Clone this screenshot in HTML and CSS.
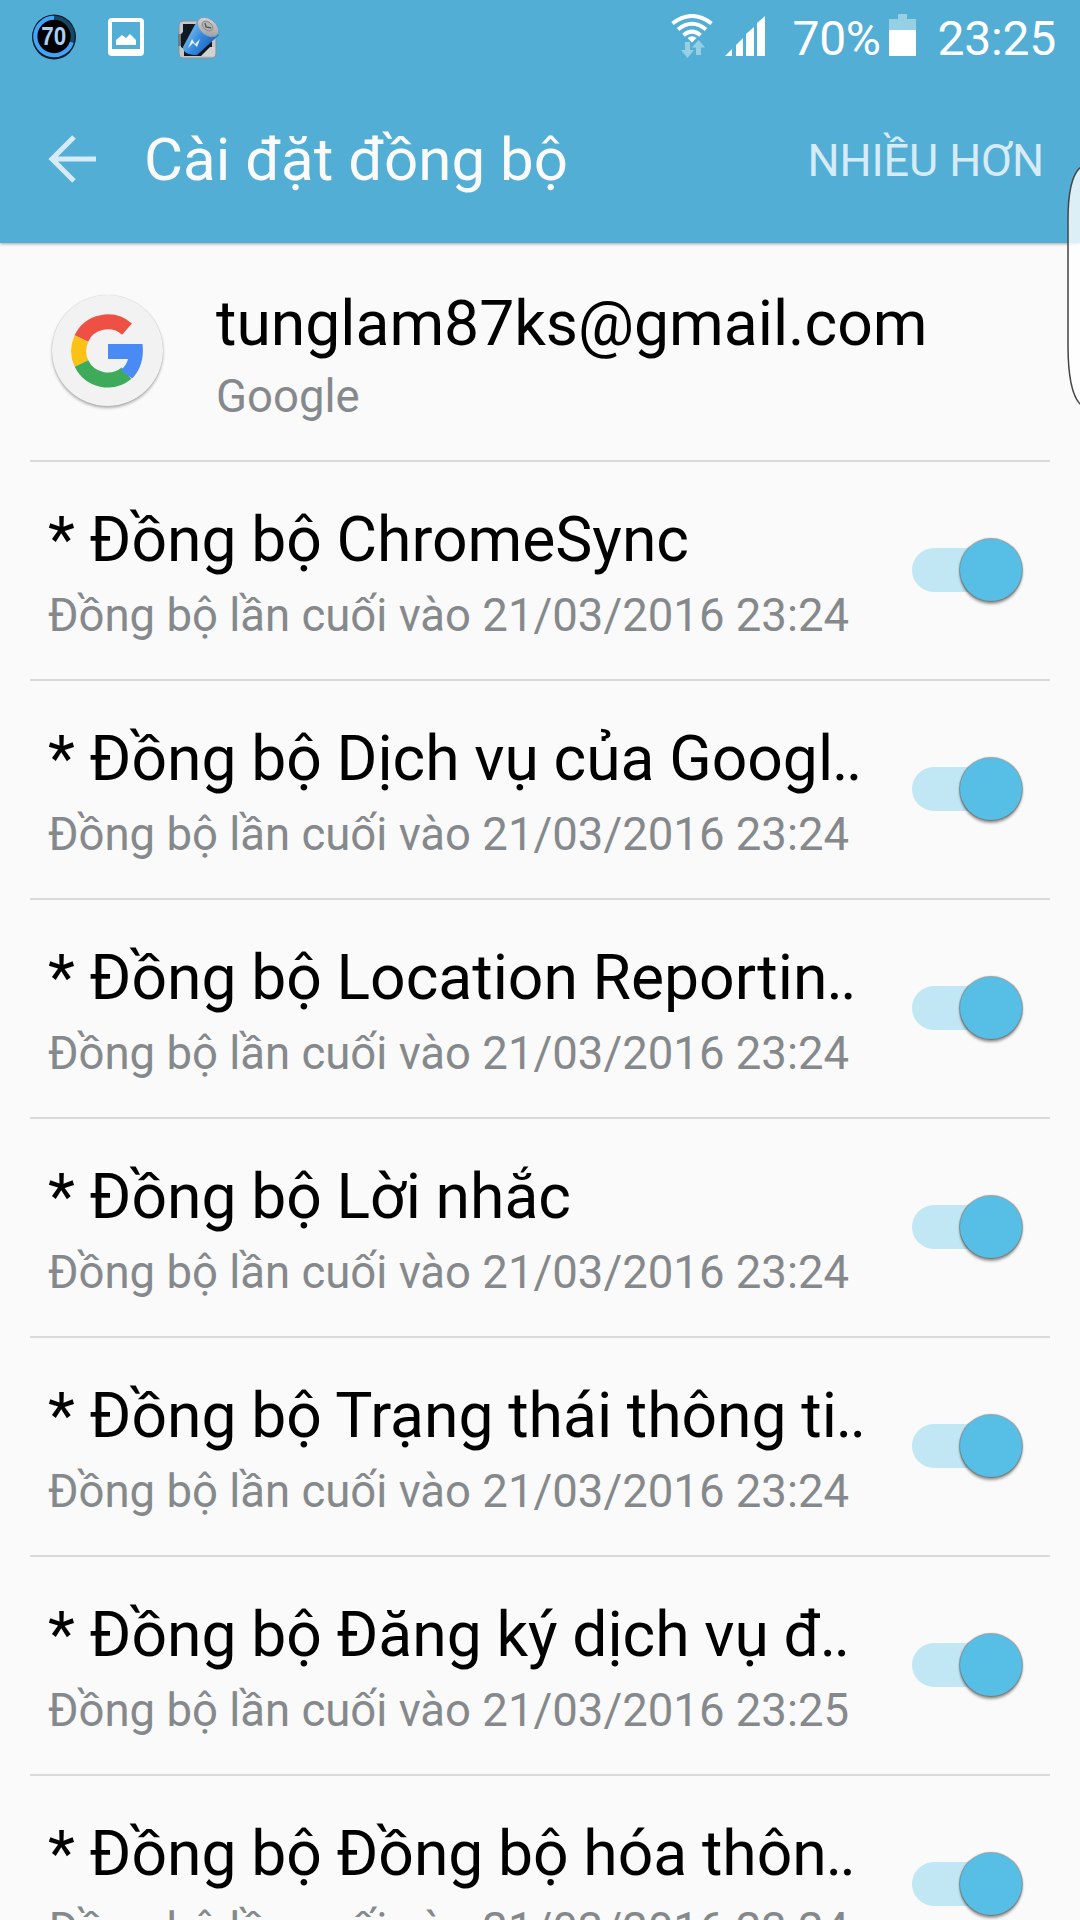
FILE: index.html
```html
<!DOCTYPE html>
<html lang="vi">
<head>
<meta charset="utf-8">
<title>Cài đặt đồng bộ</title>
<link rel="stylesheet" href="styles.css">
</head>
<body>
<div class="screen">
  <header class="header">
    <div class="status">
      <div class="notifications">
        <div class="gauge">
          <svg width="44" height="46" viewBox="0 0 44 46">
            <ellipse cx="22" cy="23" rx="22" ry="22.5" fill="#0a1a26"/>
            <circle cx="22" cy="22.5" r="18.7" fill="#000" stroke="#174766" stroke-width="4"/>
            <path d="M22 3.8A18.7 18.7 0 1 0 39.8 28.3" fill="none" stroke="#3fa5fb" stroke-width="4"/>
            <text class="gauge-text" x="21.7" y="31" text-anchor="middle" textLength="25" lengthAdjust="spacingAndGlyphs">70</text>
          </svg>
        </div>
        <svg class="photo" width="36" height="38" viewBox="0 0 36 38">
          <path fill="#fff" fill-rule="evenodd" d="M4 0h28a4 4 0 0 1 4 4v30a4 4 0 0 1-4 4H4a4 4 0 0 1-4-4V4a4 4 0 0 1 4-4zM4 4v27h28V4z"/>
          <path fill="#fff" d="M8 27v-5l6-5 4 3 4-4 6 6v5z"/>
        </svg>
        <svg class="saver" width="44" height="44" viewBox="0 0 44 44">
          <defs>
            <linearGradient id="cell" x1="0" y1=".2" x2="1" y2=".8"><stop offset="0" stop-color="#8accf5"/><stop offset=".5" stop-color="#3187dd"/><stop offset="1" stop-color="#1b55a8"/></linearGradient>
            <linearGradient id="cap" x1="0" y1="0" x2="1" y2="1"><stop offset="0" stop-color="#ddd"/><stop offset="1" stop-color="#999"/></linearGradient>
          </defs>
          <rect x="2" y="4" width="37" height="37" rx="4" fill="#c4c8ca" stroke="#8a9095" stroke-width="1"/>
          <path d="M6 7h29v24l-7 8H7v-7l-3-2V17l2-2z" fill="#101820"/>
          <path d="M24 39l9-9h5v9z" fill="#d0d2d4"/>
          <path d="M1 17h3v12H1z" fill="#6f7a82"/>
          <path d="M20 4L6 30q0 8 14 8L42 18z" fill="url(#cell)"/>
          <ellipse cx="31" cy="10" rx="12" ry="8" transform="rotate(38 31 10)" fill="url(#cap)" stroke="#6f9fc8"/>
          <ellipse cx="30.500" cy="9" rx="6" ry="4" transform="rotate(38 30.500 9)" fill="#b5b5b5" stroke="#777" stroke-width=".7"/>
          <path d="M28 6l1 4 5 1" fill="none" stroke="#555" stroke-width="1.300"/>
          <path d="M11 31l4-9 3 5 5-5-3 8-4-4z" fill="#e8f3ff"/>
        </svg>
      </div>
      <div class="indicators">
        <svg class="wifi" width="42" height="46" viewBox="0 0 42 46">
          <g fill="none" stroke="#fff" stroke-width="4">
            <path d="M1.500 9.500Q21-5.500 40.500 9.500"/>
            <path d="M7 15.500Q21 4 35 15.500"/>
            <path d="M12.500 21.200Q21 14 29.500 21.200"/>
          </g>
          <path d="M16.500 24q4.500-3.500 9 0L21 28.500z" fill="#fff"/>
          <path d="M14 28h5v8h4l-6.500 8L10 36h4z" fill="#97d0e5"/>
          <path d="M27.500 26l6.500 7.500h-4V41h-5v-7.500h-4z" fill="#97d0e5"/>
        </svg>
        <svg class="signal" width="40" height="40" viewBox="0 0 40 40" fill="#fff">
          <path d="M0 40l7-7v7zM11 40V29l7-7v18zM21 40V18l8-7v29zM32 40V7l8-7v40z"/>
        </svg>
        <span class="percent">70%</span>
        <svg class="battery" width="27" height="42" viewBox="0 0 27 42">
          <path d="M9 0h9v5h9v11H0V5h9z" fill="#97d0e5"/>
          <path d="M0 16h27v26H0z" fill="#fff"/>
        </svg>
        <span class="clock">23:25</span>
      </div>
    </div>
    <div class="appbar">
      <svg class="back" width="48" height="48" viewBox="0 0 48 48" fill="none" stroke="#d6ebf5" stroke-width="5">
        <path d="M48 24H5M26 2L4 24l22 22"/>
      </svg>
      <h1 class="title">Cài đặt đồng bộ</h1>
      <span class="more">NHIỀU HƠN</span>
    </div>
  </header>

  <main class="list">
    <section class="row account">
      <div class="avatar">
        <svg width="72" height="74" viewBox="0 0 72 74">
          <g fill="none" stroke-width="15">
            <path d="M10.300 24.500A29.300 29.300 0 0 1 56 15.200" stroke="#ee5144"/>
            <path d="M10.500 49.500A29.300 29.300 0 0 1 10.500 24.500" stroke="#fbc116"/>
            <path d="M55.500 59.300A29.300 29.300 0 0 1 10.500 49.500" stroke="#3dab5a"/>
          </g>
          <path d="M37 30h34.500C73.500 46 68 58 61 64.500L49.500 56Q55.500 52 57 45H37z" fill="#4a8af5"/>
        </svg>
      </div>
      <div class="texts">
        <div class="name">tunglam87ks@gmail.com</div>
        <div class="sub">Google</div>
      </div>
    </section>
    <section class="row">
      <div class="texts"><div class="name">* Đồng bộ ChromeSync</div><div class="sub">Đồng bộ lần cuối vào 21/03/2016 23:24</div></div>
      <div class="switch"><div class="thumb"></div></div>
    </section>
    <section class="row">
      <div class="texts"><div class="name">* Đồng bộ Dịch vụ của Googl<span class="dots">..</span></div><div class="sub">Đồng bộ lần cuối vào 21/03/2016 23:24</div></div>
      <div class="switch"><div class="thumb"></div></div>
    </section>
    <section class="row">
      <div class="texts"><div class="name">* Đồng bộ Location Reportin<span class="dots">..</span></div><div class="sub">Đồng bộ lần cuối vào 21/03/2016 23:24</div></div>
      <div class="switch"><div class="thumb"></div></div>
    </section>
    <section class="row">
      <div class="texts"><div class="name">* Đồng bộ Lời nhắc</div><div class="sub">Đồng bộ lần cuối vào 21/03/2016 23:24</div></div>
      <div class="switch"><div class="thumb"></div></div>
    </section>
    <section class="row">
      <div class="texts"><div class="name">* Đồng bộ Trạng thái thông ti<span class="dots">..</span></div><div class="sub">Đồng bộ lần cuối vào 21/03/2016 23:24</div></div>
      <div class="switch"><div class="thumb"></div></div>
    </section>
    <section class="row">
      <div class="texts"><div class="name">* Đồng bộ Đăng ký dịch vụ đ<span class="dots">..</span></div><div class="sub">Đồng bộ lần cuối vào 21/03/2016 23:25</div></div>
      <div class="switch"><div class="thumb"></div></div>
    </section>
    <section class="row">
      <div class="texts"><div class="name">* Đồng bộ Đồng bộ hóa thôn<span class="dots">..</span></div><div class="sub">Đồng bộ lần cuối vào 21/03/2016 23:24</div></div>
      <div class="switch"><div class="thumb"></div></div>
    </section>
  </main>

  <svg class="edge-handle" width="14" height="242" viewBox="0 0 14 242">
    <path d="M14 2Q1 12 1 55V180Q1 228 14 240" fill="#fff" fill-opacity=".8" stroke="#444" stroke-width="1.500"/>
  </svg>
</div>
</body>
</html>
```
FILE: styles.css
```css
* { box-sizing: border-box; }

body {
  margin: 0;
  background: #fafafa;
  font-family: Roboto, "Noto Sans", sans-serif;
  color: #000;
}

.screen {
  position: relative;
  width: 1080px;
  height: 1920px;
  overflow: hidden;
  background: #fafafa;
}

.header {
  height: 243px;
  background: #52aed5;
  box-shadow: 0 1px 3px rgba(0, 0, 0, .35);
}

.status {
  display: flex;
  justify-content: space-between;
  height: 76px;
  padding: 0 24px 0 32px;
}

.notifications,
.indicators { display: flex; align-items: flex-start; }

.gauge { margin-top: 14px; height: 46px; }
.gauge-text { font: bold 25px "Liberation Sans", sans-serif; fill: #a8d0f5; }
.photo { margin: 18px 0 0 32px; }
.saver { margin: 17px 0 0 33px; }

.indicators { color: #fff; font-size: 48px; line-height: 77px; }
.wifi { margin: 14px 12px 0 0; }
.signal { margin: 16px 27px 0 0; }
.percent { width: 92px; white-space: nowrap; letter-spacing: -.3px; }
.battery { margin: 14px 21px 0 5px; }
.clock { letter-spacing: -.2px; }

.appbar {
  display: flex;
  align-items: center;
  height: 167px;
  padding: 0 36px 0 48px;
}

.back { margin: -1px 48px 0 0; }

.title {
  flex: 1;
  margin: 0;
  font-size: 60px;
  font-weight: 400;
  line-height: 76px;
  color: #fafafa;
}

.more { padding-top: 2px; font-size: 45px; letter-spacing: -.1px; color: #d6ebf5; }

.row {
  display: flex;
  align-items: flex-start;
  justify-content: space-between;
  height: 219px;
  margin: 0 30px;
  padding: 40px 28px 0 18px;
  border-bottom: 2px solid #d9d9d9;
}

.account { justify-content: flex-start; padding-top: 43px; }

.avatar {
  display: flex;
  align-items: center;
  justify-content: center;
  width: 111px;
  height: 111px;
  margin: 9px 53px 0 4px;
  padding-right: 1px;
  border-radius: 50%;
  background: #f2f2f2;
  box-shadow: 0 2px 3px rgba(0, 0, 0, .3), 0 0 1px rgba(0, 0, 0, .2);
}

.texts { white-space: nowrap; }
.name { font-size: 62.4px; line-height: 76px; word-spacing: -.8px; }
.dots { margin-left: -1px; letter-spacing: -2.6px; }
.sub { margin-top: 10px; font-size: 45.5px; line-height: 56px; color: #85898c; }
.account .sub { margin-top: 7px; }

.switch {
  display: flex;
  flex: none;
  align-items: center;
  justify-content: flex-end;
  width: 110px;
  height: 44px;
  margin-top: 46px;
  border-radius: 22px 0 0 22px;
  background: linear-gradient(to right, #c1e7f4 80px, transparent 80px);
}

.thumb {
  flex: none;
  width: 62px;
  height: 62px;
  border-radius: 50%;
  background: #57bfe5;
  box-shadow: 0 0 1px 1px rgba(90, 90, 90, .6), 0 3px 3px rgba(0, 0, 0, .4);
}

.edge-handle { position: absolute; left: 1067px; top: 165px; }
```
